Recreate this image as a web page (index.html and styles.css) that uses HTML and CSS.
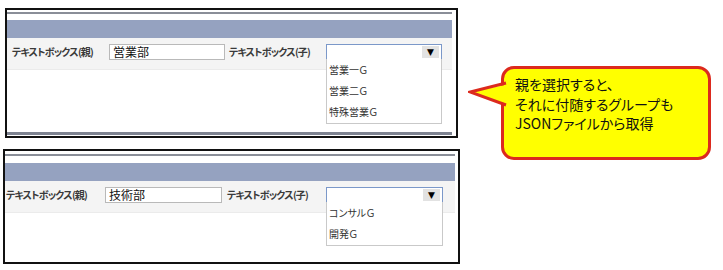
FILE: index.html
```html
<!DOCTYPE html>
<html lang="ja">
<head>
    <meta charset="UTF-8">
    <title>親子テキストボックス</title>
    <link rel="stylesheet" href="styles.css">
</head>
<body>
    <div class="page">
        <div class="shots">
            <section class="shot shot-a">
                <div class="rule"></div>
                <div class="band"></div>
                <div class="row">
                    <span class="label">テキストボックス(親)</span>
                    <div class="textbox">営業部</div>
                    <span class="label">テキストボックス(子)</span>
                    <div class="select">
                        <span class="arrow">▼</span>
                        <ul class="options">
                            <li>営業一Ｇ</li>
                            <li>営業二Ｇ</li>
                            <li>特殊営業Ｇ</li>
                        </ul>
                    </div>
                </div>
                <div class="rule rule-bottom"></div>
            </section>

            <section class="shot shot-b">
                <div class="rule"></div>
                <div class="band"></div>
                <div class="row">
                    <span class="label">テキストボックス(親)</span>
                    <div class="textbox">技術部</div>
                    <span class="label">テキストボックス(子)</span>
                    <div class="select">
                        <span class="arrow">▼</span>
                        <ul class="options">
                            <li>コンサルＧ</li>
                            <li>開発Ｇ</li>
                        </ul>
                    </div>
                </div>
            </section>
        </div>

        <div class="callout">
            <!-- speech bubble tail -->
            <svg class="tail" width="42" height="34" viewBox="0 0 42 34">
                <polygon points="42,6 2,14 42,27" fill="#ffff00"/>
                <polyline points="38,5 2,14 38,27" fill="none" stroke="#dc2a1e" stroke-width="3" stroke-linejoin="miter"/>
            </svg>
            <p>親を選択すると、<br>それに付随するグループも<br>JSONファイルから取得</p>
        </div>
    </div>
</body>
</html>
```

FILE: styles.css
```css
* {
    margin: 0;
    padding: 0;
    box-sizing: border-box;
}

body {
    background: #fff;
    font-family: "Noto Sans CJK JP", "Noto Sans", sans-serif;
    color: #222;
}

.page {
    display: flex;
    align-items: flex-start;
}

.shots {
    display: flex;
    flex-direction: column;
}

/* screenshot frames */
.shot {
    display: flex;
    flex-direction: column;
    border: 2px solid #111;
    background: #fff;
}

.shot-a {
    width: 453px;
    height: 130px;
    margin: 8px 0 0 5px;
    padding: 2px 4px 1px 0;
}

.shot-b {
    width: 457px;
    height: 115px;
    margin: 11px 0 0 3px;
    padding: 3px 3px 0 0;
}

.rule {
    height: 2px;
    background: #8a8e98;
}

.rule-bottom {
    margin-top: auto;
    height: 3px;
    background: #7e8391;
}

.band {
    height: 18px;
    margin-top: 6px;
    background: #95a2c0;
}

.shot-b .band {
    margin-top: 7px;
}

.row {
    display: flex;
    align-items: flex-start;
    height: 32px;
    padding: 6px 0 0 5px;
    background: #f4f4f4;
    border-bottom: 1px solid #ebebeb;
}

.label {
    flex: 0 0 97px;
    min-width: 0;
    height: 16px;
    line-height: 15px;
    font-size: 10px;
    font-weight: 700;
    color: #3a3a3a;
    font-feature-settings: "palt";
    letter-spacing: -0.8px;
    white-space: nowrap;
}

.textbox {
    flex: 0 0 116px;
    height: 16px;
    margin-right: 4px;
    padding-left: 3px;
    border: 1px solid #b9b9b9;
    background: #fff;
    font-size: 12px;
    line-height: 14px;
    color: #111;
}

.select {
    position: relative;
    display: flex;
    justify-content: flex-end;
    flex: 0 0 116px;
    height: 16px;
    border: 1px solid #7b98c9;
    background: #fff;
}

/* second shot is cropped at a slightly larger scale */
.shot-b .row {
    padding-left: 1px;
}

.shot-b .label {
    flex-basis: 99px;
}

.shot-b .textbox {
    flex-basis: 117px;
    margin-right: 5px;
}

.shot-b .select {
    flex-basis: 117px;
}

.arrow {
    width: 17px;
    height: 12px;
    margin: 1px 2px 0 0;
    background: #e2e2e2;
    font-family: "DejaVu Sans", sans-serif;
    font-size: 9px;
    line-height: 12px;
    text-align: center;
    color: #000;
}

/* open dropdown list */
.options {
    position: absolute;
    top: 100%;
    left: -1px;
    width: calc(100% + 2px);
    list-style: none;
    border: 1px solid #c9c9c9;
    border-top: none;
    background: #fff;
    padding-bottom: 1px;
}

.options li {
    height: 21px;
    padding-left: 2px;
    font-size: 10px;
    line-height: 21px;
    color: #333;
    font-feature-settings: "palt";
}

/* speech bubble */
.callout {
    position: relative;
    width: 210px;
    height: 94px;
    margin: 66px 0 0 41px;
    padding: 6px 0 0 11px;
    border: 3px solid #dc2a1e;
    border-radius: 13px;
    background: #ffff00;
}

.tail {
    position: absolute;
    left: -36px;
    top: 9px;
}

.callout p {
    position: relative;
    font-size: 14px;
    line-height: 19.5px;
    color: #111;
    font-feature-settings: "palt";
}
```
